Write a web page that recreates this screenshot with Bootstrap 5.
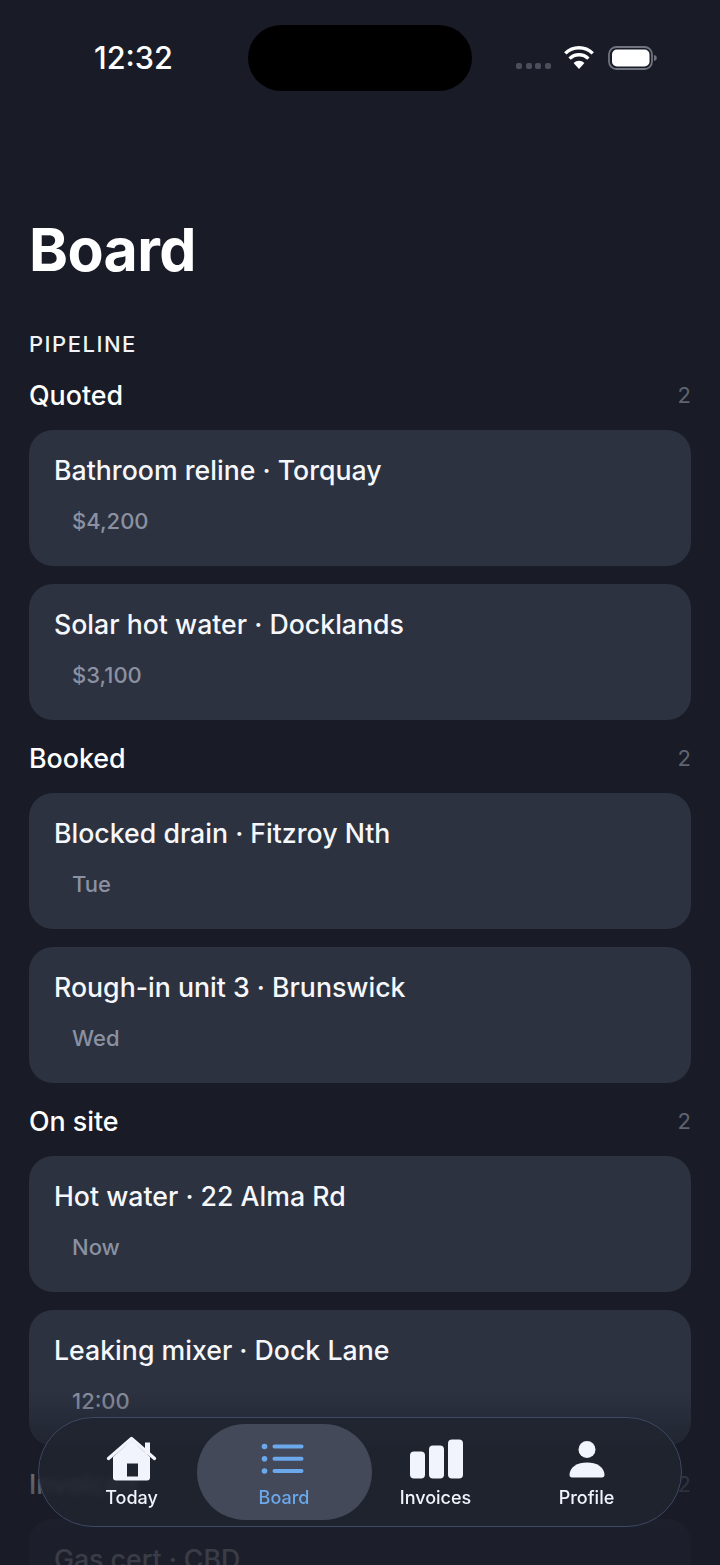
<!DOCTYPE html>
<html lang="en">
<head>
    <meta charset="UTF-8">
    <meta name="viewport" content="width=device-width, initial-scale=1.0">
    <title>Board</title>
    <link href="https://cdn.jsdelivr.net/npm/bootstrap@5.3.0/dist/css/bootstrap.min.css" rel="stylesheet">
    <style>
        body {
            background-color: #191c27;
            color: #fff;
            font-family: Inter, "Liberation Sans", sans-serif;
        }
        .phone {
            height: 1565px;
            overflow: hidden;
            position: relative;
        }
        .status-bar {
            height: 116px;
            padding: 25px 0 0 94px;
        }
        .status-time {
            font-size: 30.6px;
            font-weight: 500;
            line-height: 66px;
            width: 154px;
        }
        .island {
            width: 224px;
            height: 66px;
            background: #000;
            border-radius: 33px;
        }
        .status-icons {
            height: 66px;
            margin-left: 44px;
        }
        .sig-row {
            gap: 3.6px;
            margin-top: 16px;
            margin-right: 13px;
        }
        .sig-dot {
            width: 6px;
            height: 6px;
            border-radius: 2px;
            background: #4b4f5c;
        }
        .wifi-icon {
            margin-right: 14px;
        }
        .screen-body {
            padding: 0 29px;
        }
        .board-title {
            font-size: 59px;
            font-weight: 700;
            line-height: 72px;
            margin: 98px 0 0;
            letter-spacing: -0.6px;
        }
        .eyebrow {
            font-size: 22px;
            font-weight: 500;
            letter-spacing: 1.5px;
            line-height: 26px;
            margin-top: 45px;
            color: #f1f3f8;
        }
        .stage-head {
            height: 30px;
            margin-top: 23px;
            margin-bottom: 20px;
        }
        .stage-name {
            font-size: 26.8px;
            font-weight: 500;
            line-height: 30px;
        }
        .stage-count {
            font-size: 22px;
            color: #5f6472;
        }
        .job-card {
            height: 136px;
            background: #2c3240;
            border: 0;
            border-radius: 24px;
            padding: 23px 25px 0;
            margin-bottom: 18px;
        }
        .job-name {
            font-size: 26.7px;
            font-weight: 500;
            line-height: 34px;
            color: #f6f7fb;
        }
        .job-meta {
            font-size: 22px;
            font-weight: 500;
            line-height: 28px;
            margin-top: 20px;
            padding-left: 18px;
            color: #8b91a1;
        }
        .bottom-fade {
            position: absolute;
            left: 0;
            right: 0;
            bottom: 0;
            height: 175px;
            background: linear-gradient(rgba(25, 28, 39, 0), rgba(25, 28, 39, 0.55) 30%, rgba(25, 28, 39, 0.85) 80%);
        }
        .tab-bar {
            position: absolute;
            left: 38px;
            bottom: 38px;
            width: 644px;
            height: 110px;
            border-radius: 55px;
            border: 1.5px solid #3f4863;
            background: rgba(32, 36, 48, 0.82);
            backdrop-filter: blur(3px);
            padding: 6px 0 0 16.5px;
        }
        .tab-item {
            width: 152px;
            height: 96px;
            color: #f1f4fc;
            font-size: 18px;
            font-weight: 500;
            line-height: 22px;
        }
        .tab-item:last-child {
            width: 150px;
        }
        .tab-item.on {
            width: 175px;
            margin: 0 -12px 0 -11px;
            color: #6ba8ec;
            background: #434958;
            border-radius: 48px;
        }
        .tab-item svg {
            display: block;
            height: 50px;
            width: 60px;
            margin-top: 7px;
            margin-bottom: 6px;
        }
    </style>
</head>
<body>
    <div class="phone">
        <!-- Status bar -->
        <div class="status-bar d-flex align-items-start">
            <div class="status-time">12:32</div>
            <div class="island flex-shrink-0"></div>
            <div class="status-icons d-flex align-items-center">
                <div class="sig-row d-flex">
                    <span class="sig-dot"></span><span class="sig-dot"></span><span class="sig-dot"></span><span class="sig-dot"></span>
                </div>
                <svg class="wifi-icon" width="30" height="24" viewBox="0 0 30 24">
                    <path d="M15 23l-5.400-6a7.600 7.600 0 0 1 10.800 0z" fill="#fff"/>
                    <path d="M5.600 12.600a13.400 13.400 0 0 1 18.800 0" fill="none" stroke="#fff" stroke-width="3.4"/>
                    <path d="M1.300 7.400a19.600 19.600 0 0 1 27.400 0" fill="none" stroke="#fff" stroke-width="3.4"/>
                </svg>
                <svg width="50" height="24" viewBox="0 0 50 24">
                    <rect x="1" y="1" width="43" height="22" rx="7.500" fill="none" stroke="#70747f" stroke-width="1.800"/>
                    <rect x="4" y="3.500" width="37.500" height="17" rx="5" fill="#fff"/>
                    <path d="M46 9c2 .4 2.800 1.600 2.800 3s-.8 2.600-2.800 3z" fill="#70747f"/>
                </svg>
            </div>
        </div>

        <main class="screen-body">
            <h1 class="board-title">Board</h1>
            <div class="eyebrow">PIPELINE</div>
            <div id="stages"></div>
        </main>

        <div class="bottom-fade"></div>

        <!-- Floating tab bar -->
        <nav class="tab-bar d-flex">
            <div class="tab-item d-flex flex-column align-items-center">
                <svg viewBox="0 0 60 50">
                    <path d="M11 26 29.500 9 48 26v20.500a3 3 0 0 1-3 3H14a3 3 0 0 1-3-3z" fill="#f1f4fc"/>
                    <path d="M6.500 27.500 29.500 7.500l23 20" fill="none" stroke="#f1f4fc" stroke-width="3.400" stroke-linecap="round" stroke-linejoin="round"/>
                    <rect x="43" y="11.500" width="5" height="12" fill="#f1f4fc"/>
                    <rect x="25" y="32.500" width="11" height="13" fill="#20242f"/>
                </svg>
                Today
            </div>
            <div class="tab-item on d-flex flex-column align-items-center">
                <svg viewBox="0 0 60 50" fill="#6ba8ec">
                    <circle cx="10.500" cy="15.500" r="2.800"/><circle cx="10.500" cy="27.800" r="2.800"/><circle cx="10.500" cy="40" r="2.800"/>
                    <rect x="18.500" y="13.500" width="31" height="4" rx="2"/><rect x="18.500" y="25.800" width="31" height="4" rx="2"/><rect x="18.500" y="38" width="31" height="4" rx="2"/>
                </svg>
                Board
            </div>
            <div class="tab-item d-flex flex-column align-items-center">
                <svg viewBox="0 0 60 50" fill="#f1f4fc">
                    <rect x="4" y="20.500" width="15" height="27" rx="4"/><rect x="23" y="14.500" width="15" height="33" rx="4"/><rect x="42" y="8.500" width="15" height="39" rx="4"/>
                </svg>
                Invoices
            </div>
            <div class="tab-item d-flex flex-column align-items-center">
                <svg viewBox="0 0 60 50" fill="#f1f4fc">
                    <circle cx="30" cy="18.500" r="8.500"/>
                    <path d="M12.500 44c0-8 8-12.500 17.500-12.500S47.500 36 47.500 44c0 1.500-1 2.500-2.500 2.500H15c-1.500 0-2.500-1-2.500-2.500z"/>
                </svg>
                Profile
            </div>
        </nav>
    </div>

    <script>
        // Pipeline stages and their jobs
        const stages = [
            { name: "Quoted", count: 2, jobs: [["Bathroom reline · Torquay", "$4,200"], ["Solar hot water · Docklands", "$3,100"]] },
            { name: "Booked", count: 2, jobs: [["Blocked drain · Fitzroy Nth", "Tue"], ["Rough-in unit 3 · Brunswick", "Wed"]] },
            { name: "On site", count: 2, jobs: [["Hot water · 22 Alma Rd", "Now"], ["Leaking mixer · Dock Lane", "12:00"]] },
            { name: "Invoiced", count: 2, jobs: [["Gas cert · CBD", ""]] }
        ];

        document.getElementById("stages").innerHTML = stages.map(stage => `
            <div class="stage-head d-flex justify-content-between align-items-center">
                <span class="stage-name">${stage.name}</span>
                <span class="stage-count">${stage.count}</span>
            </div>
            ${stage.jobs.map(job => `
                <div class="card job-card">
                    <div class="job-name">${job[0]}</div>
                    <div class="job-meta">${job[1]}</div>
                </div>
            `).join("")}
        `).join("");
    </script>
    <script src="https://cdn.jsdelivr.net/npm/bootstrap@5.3.0/dist/js/bootstrap.bundle.min.js"></script>
</body>
</html>
